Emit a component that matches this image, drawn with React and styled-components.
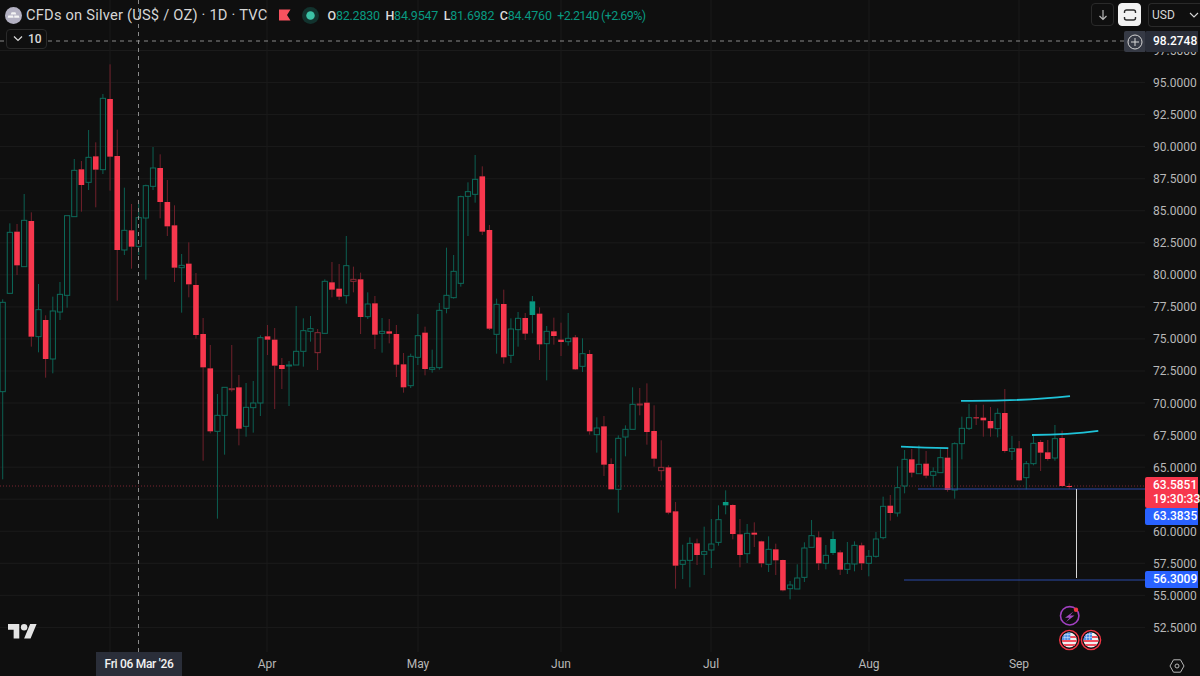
import React from 'react';
import styled, { createGlobalStyle } from 'styled-components';

const GlobalStyle = createGlobalStyle`
  html, body {
    margin: 0;
    height: 100%;
    background: #0f0f0f;
    overflow: hidden;
  }
`;

const Page = styled.div`
  position: relative;
  display: grid;
  grid-template-columns: 1145px 55px;
  grid-template-rows: 652px 24px;
  width: 1200px;
  height: 676px;
  background: #0f0f0f;
  color: #dbdbdb;
  font-family: Roboto, "Liberation Sans", sans-serif;
  overflow: hidden;
`;

const ChartPane = styled.div`
  position: relative;
  grid-column: 1;
  grid-row: 1;
`;

const ChartSvg = styled.svg`
  display: block;
`;

const Legend = styled.div`
  position: absolute;
  top: 4px;
  left: 5px;
  display: flex;
  flex-direction: column;
  align-items: flex-start;
  gap: 3px;
`;

const LegendRow = styled.div`
  display: flex;
  align-items: center;
  height: 22px;
  white-space: nowrap;
`;

const SymbolTitle = styled.span`
  margin-left: 4px;
  font-size: 14.7px;
  letter-spacing: 0.2px;
  color: #d6d6d6;
`;

const StatusIcons = styled.span`
  display: flex;
  align-items: center;
  gap: 11px;
  margin: 0 8px 0 12px;
`;

const Ohlc = styled.span`
  display: flex;
  gap: 5.5px;
  font-size: 12.5px;
  letter-spacing: -0.2px;
`;

const OhlcItem = styled.span`
  color: #089981;
  letter-spacing: ${p => (p.$tight ? '-0.6px' : 'inherit')};
  & > b {
    font-weight: 500;
    color: #dbdbdb;
  }
`;

const CollapseButton = styled.button`
  display: flex;
  align-items: center;
  gap: 4px;
  height: 20px;
  margin-left: 1px;
  padding: 0 4px 0 5px;
  background: #0f0f0f;
  border: 1px solid #2a2a2a;
  border-radius: 4px;
  color: #dbdbdb;
  font: 500 12px Roboto, sans-serif;
`;

const TopRight = styled.div`
  position: absolute;
  top: 3px;
  right: 0;
  display: flex;
  align-items: flex-start;
  gap: 4px;
`;

const ToolButton = styled.button`
  display: flex;
  align-items: center;
  justify-content: center;
  width: 23px;
  height: 23px;
  padding: 0;
  border-radius: 4px;
  border: 1px solid ${p => (p.$active ? '#f2f2f2' : '#2a2a2a')};
  background: ${p => (p.$active ? '#f2f2f2' : '#0f0f0f')};
  color: ${p => (p.$active ? '#2a2a2a' : '#b8b8b8')};
`;

const CurrencySelect = styled.button`
  display: flex;
  align-items: center;
  justify-content: space-between;
  width: 52px;
  height: 24px;
  margin-left: 3px;
  padding: 0 1px 0 3px;
  background: #0f0f0f;
  border: 1px solid #2a2a2a;
  border-right: none;
  border-radius: 4px 0 0 4px;
  color: #d6d6d6;
  font: 12px Roboto, sans-serif;
`;

const PriceAxis = styled.div`
  position: relative;
  grid-column: 2;
  grid-row: 1 / span 2;
  display: flex;
  flex-direction: column;
  padding-top: 35px;
`;

const PriceLabel = styled.div`
  flex: 0 0 32.05px;
  display: flex;
  align-items: center;
  padding-left: 8px;
  font-size: 12px;
  color: #b8b8b8;
`;

const PriceTag = styled.div`
  position: absolute;
  left: 0;
  top: ${p => p.$top}px;
  width: 45px;
  padding: 2px 0 2px 8px;
  background: ${p => p.$bg};
  border-radius: 2px 0 0 2px;
  color: #fff;
  font-size: 12px;
  font-weight: 500;
  line-height: ${p => p.$line || 13}px;
`;

const CrossPlus = styled.div`
  position: absolute;
  left: -21px;
  top: 31px;
  width: 21px;
  height: 21px;
  display: flex;
  align-items: center;
  justify-content: center;
  background: #363a45;
  border-radius: 2px 0 0 2px;
  color: #d6d6d6;
`;

const TimeAxis = styled.div`
  position: relative;
  grid-column: 1;
  grid-row: 2;
  font-size: 12px;
  color: #b8b8b8;
`;

const TimeLabel = styled.span`
  position: absolute;
  left: ${p => p.$x}px;
  top: 5px;
  transform: translateX(-50%);
`;

const TimeTag = styled.div`
  position: absolute;
  left: 96px;
  top: 0;
  width: 86px;
  height: 24px;
  display: flex;
  align-items: center;
  justify-content: center;
  background: #2a2e39;
  color: #f2f2f2;
  font-weight: 500;
  letter-spacing: -0.3px;
`;

const SettingsButton = styled.span`
  position: absolute;
  right: -40px;
  top: 6px;
  color: #b8b8b8;
  display: flex;
`;

const Logo = styled.svg`
  position: absolute;
  left: 8px;
  top: 624px;
`;

// candle rows: type, high, body top, body bottom, low, in screen px * 3 from the crop origin
const segments = [
  { y0: 50, rows: [
    'g 748 757 1025 1288', 'g 520 547 730 730', 'r 522 545 646 675', 'g 432 511 650 650', 'r 487 513 860 890',
    'g 702 779 860 907', 'r 796 810 927 983', 'g 740 783 927 970', 'g 696 733 786 810', 'g 497 497 736 773',
    'g 327 361 500 500', 'r 333 358 405 485', 'g 240 322 397 420', 'r 277 319 359 472', 'g 132 145 359 372',
    'r 43 147 320 422', 'r 239 318 600 752', 'g 413 541 600 615', 'r 462 541 590 656', 'g 460 503 589 615',
    'g 404 407 504 689', 'g 291 354 409 420', 'r 313 354 456 505', 'r 390 456 529 558', 'r 466 526 653 696',
    'g 612 646 653 788', 'r 577 641 703 742', 'r 669 705 855 866', 'r 804 852 952 1232', 'r 885 955 1144 1150',
    'g 1032 1096 1144 1406', 'g 1012 1012 1096 1214', 'h 885 1016 1019 1025', 'r 975 1012 1136 1186',
    'g 999 1072 1129 1160', 'g 993 1059 1073 1148', 'g 856 863 1059 1098', 'r 825 859 869 915',
    'r 834 869 947 1077', 'r 924 945 957 1017', 'g 933 945 948 1068', 'g 768 904 945 945',
  ] },
  { y0: 140, rows: [
    'g 535 572 634 680', 'g 528 566 574 605', 'h 567 578 638 690', 'g 418 424 580 582', 'r 366 427 449 472',
    'r 372 446 470 480', 'g 288 377 467 491', 'h 380 418 424 457', 'r 398 418 531 582', 'g 457 492 530 537',
    'r 468 490 584 627', 'g 534 574 580 638', 'r 537 574 581 610', 'r 555 582 674 711', 'r 639 673 742 758',
    'g 641 649 737 744', 'g 522 587 652 675', 'r 560 578 687 706', 'g 629 683 688 698', 'g 489 511 683 689',
    'g 323 466 505 520', 'g 345 394 473 476', 'g 167 170 430 440', 'g 127 155 169 288', 'g 45 118 163 188',
    'r 79 109 275 285', 'r 255 270 566 570', 'g 476 493 583 641', 'r 449 492 652 671', 'g 535 567 646 669',
    'g 516 535 569 620', 'r 519 534 581 600', 'f 468 484 525 580', 'r 502 521 613 660', 'g 558 574 611 721',
    'r 533 574 588 614', 'r 548 599 606 648', 'g 519 595 605 617', 'r 585 592 688 690', 'g 595 641 679 696',
  ] },
  { y0: 370, rows: [
    'r -60 -48 184 194', 'g 142 174 194 248', 'r 138 169 284 318', 'r 265 282 358 358', 'g 196 205 358 428',
    'g 166 178 201 259', 'g 52 103 178 178', 'h 54 102 105 136', 'r 40 98 186 224', 'r 106 183 266 290',
    'h 211 292 302 332', 'r 286 292 428 433', 'r 396 424 587 656', 'g 524 571 583 627', 'g 502 520 571 652',
    'r 506 520 555 585', 'g 470 545 553 615', 'g 447 522 540 594', 'g 406 449 517 527', 'f 361 396 406 433',
    'r 403 405 492 508', 'r 447 493 555 592', 'g 462 490 551 579', 'r 457 488 494 531', 'r 512 514 580 592',
    'g 499 538 583 606', 'r 521 538 571 615', 'r 569 570 661 664', 'g 633 645 656 688', 'g 583 624 657 657',
    'g 517 534 622 636', 'g 450 497 532 532', 'r 484 502 580 600', 'g 525 556 580 598', 'f 484 507 549 555',
    'r 541 547 599 615', 'g 516 581 598 612', 'g 514 526 582 604', 'r 518 526 580 600', 'g 540 559 580 619',
    'g 486 507 559 563',
  ] },
  { y0: 380, rows: [
    'g 350 379 473 478', 'r 345 377 399 422', 'g 259 323 399 410', 'g 210 238 318 340', 'r 207 238 278 292',
    'g 196 253 281 281', 'r 213 251 287 295', 'g 262 275 286 320', 'g 208 233 278 278', 'r 207 233 330 335',
    'g 187 191 330 356', 'g 110 145 191 238', 'g 72 113 145 150', 'r 74 112 114 135', 'r 74 113 121 170',
    'r 81 123 145 170', 'g 85 100 146 172', 'r 27 99 213 218', 'g 168 206 214 240', 'r 183 205 301 303',
    'g 243 251 293 328', 'g 168 190 251 256', 'r 180 186 218 273', 'r 180 217 237 242', 'g 135 176 234 242',
    'r 152 174 318 320', 'r 310 318 319 328',
  ] },
];

const candles = segments.flatMap(seg =>
  seg.rows.map(row => {
    const [type, ...nums] = row.split(' ');
    const [high, top, bottom, low] = nums.map(n => seg.y0 + Number(n) / 3);
    return { type, high, top, bottom, low };
  }),
);

const candleColors = {
  g: { wick: '#0c5f52', body: 'none', edge: '#0c6a5a' },
  f: { wick: '#0c5f52', body: '#089981', edge: '#089981' },
  r: { wick: '#70202b', body: '#f7374d', edge: '#f7374d' },
  h: { wick: '#70202b', body: 'none', edge: '#8a2a36' },
};

// 62.5000 sits behind the price tags, so its row stays empty
const prices = [
  '97.5000', '95.0000', '92.5000', '90.0000', '87.5000', '85.0000', '82.5000', '80.0000', '77.5000', '75.0000',
  '72.5000', '70.0000', '67.5000', '65.0000', '', '60.0000', '57.5000', '55.0000', '52.5000',
];

const gridRows = prices.map((_, i) => 50.5 + i * 32.05);
const gridCols = [110, 267, 418, 561, 711, 869, 1019];
const months = [
  { label: 'Apr', x: 267 },
  { label: 'May', x: 418 },
  { label: 'Jun', x: 561 },
  { label: 'Jul', x: 711 },
  { label: 'Aug', x: 869 },
  { label: 'Sep', x: 1019 },
];

const Candle = ({ candle, index }) => {
  const x = 2.7 + 7.158 * index;
  const c = candleColors[candle.type];
  const hollow = c.body === 'none';
  return (
    <g>
      <line x1={x} x2={x} y1={candle.high} y2={candle.top} stroke={c.wick} />
      <line x1={x} x2={x} y1={candle.bottom} y2={candle.low} stroke={c.wick} />
      <rect
        x={x - (hollow ? 2.6 : 2.8)}
        y={candle.top}
        width={hollow ? 5.2 : 5.6}
        height={Math.max(candle.bottom - candle.top, 1)}
        fill={c.body}
        stroke={hollow ? c.edge : 'none'}
      />
    </g>
  );
};

const UsFlag = ({ cx, id }) => (
  <g>
    <clipPath id={id}>
      <circle cx={cx} cy="640" r="7.5" />
    </clipPath>
    <circle cx={cx} cy="640" r="9.6" fill="#0f0f0f" stroke="#f23645" strokeWidth="1.4" />
    <g clipPath={`url(#${id})`}>
      <rect x={cx - 8} y="632" width="16" height="16" fill="#f0f0f0" />
      <rect x={cx - 8} y="636" width="16" height="2" fill="#f0505f" />
      <rect x={cx - 8} y="640" width="16" height="2" fill="#f0505f" />
      <rect x={cx - 8} y="644" width="16" height="2" fill="#f0505f" />
      <rect x={cx - 8} y="632" width="9" height="8" fill="#4f8fe8" />
      <path d={`M${cx - 6} 634.5h7M${cx - 6} 637.5h7M${cx - 4.5} 632v8M${cx - 1.5} 632v8`} stroke="#cfe0f7" strokeWidth="0.6" />
    </g>
  </g>
);

const PriceChart = () => (
  <ChartSvg width="1145" height="652" viewBox="0 0 1145 652">
    {gridRows.map(y => (
      <line key={y} x1="0" x2="1145" y1={y} y2={y} stroke="#1b1b1b" />
    ))}
    {gridCols.map(x => (
      <line key={x} x1={x} x2={x} y1="0" y2="652" stroke="#1b1b1b" />
    ))}
    <line x1="0" x2="1145" y1="486" y2="486" stroke="#7a2530" strokeDasharray="1 2" />
    {candles.map((c, i) => (
      <Candle key={i} candle={c} index={i} />
    ))}
    <line x1="138.5" x2="138.5" y1="0" y2="652" stroke="#8a8a8a" strokeDasharray="4 4" />
    <line x1="0" x2="1124" y1="41" y2="41" stroke="#8a8a8a" strokeDasharray="4 4" />
    <line x1="918" x2="1145" y1="489" y2="489" stroke="#2a4aa8" strokeWidth="1.2" />
    <line x1="904" x2="1145" y1="580" y2="580" stroke="#2a4aa8" strokeWidth="1.2" />
    <line x1="1076.5" x2="1076.5" y1="489" y2="578" stroke="#d8d8d8" strokeWidth="1" />
    <g fill="none" stroke="#1fc3d8" strokeWidth="1.8">
      <path d="M901 446.7C918 447.5 935 448 948.3 448.2" />
      <path d="M961 400.8C990 401 1030 400.5 1070 396.2" />
      <path d="M1032 435C1055 434.8 1078 433.5 1098.3 430.8" />
    </g>
    <circle cx="1069.7" cy="615.8" r="9.2" fill="#0f0f0f" stroke="#a040c0" strokeWidth="1.6" />
    <path d="M1073.5 611.5L1065 617.8H1069.5L1066 622L1074.500 615.6H1070z" fill="#a348c0" />
    <circle cx="1076" cy="609.8" r="2.2" fill="#f23645" />
    <UsFlag cx={1069.3} id="flag-a" />
    <UsFlag cx={1091} id="flag-b" />
  </ChartSvg>
);

const SilverIcon = () => (
  <svg width="17" height="17" viewBox="0 0 18 18">
    <circle cx="9" cy="9" r="9" fill="#b3b1c2" />
    <path d="M7 5.500h4l1 2.500H6z M3.500 9h5l.7 2.500H2.800z M9.800 9h4.700l.8 2.500H9.800z" fill="#f4f4f4" />
  </svg>
);

const FlagIcon = () => (
  <svg width="12" height="12" viewBox="0 0 12 12">
    <path d="M0 .5h11.500L8 6l3.500 5.500H0z" fill="#f7525f" />
  </svg>
);

const StatusDot = () => (
  <svg width="17" height="17" viewBox="0 0 18 18">
    <circle cx="9" cy="9" r="9" fill="#12332e" />
    <circle cx="9" cy="9" r="4.500" fill="#3cc2a6" />
  </svg>
);

const App = () => (
  <Page>
    <GlobalStyle />
    <ChartPane>
      <PriceChart />
      <Legend>
        <LegendRow>
          <SilverIcon />
          <SymbolTitle>CFDs on Silver (US$ / OZ) · 1D · TVC</SymbolTitle>
          <StatusIcons>
            <FlagIcon />
            <StatusDot />
          </StatusIcons>
          <Ohlc>
            <OhlcItem><b>O</b>82.2830</OhlcItem>
            <OhlcItem><b>H</b>84.9547</OhlcItem>
            <OhlcItem><b>L</b>81.6982</OhlcItem>
            <OhlcItem><b>C</b>84.4760</OhlcItem>
            <OhlcItem $tight>+2.2140 (+2.69%)</OhlcItem>
          </Ohlc>
        </LegendRow>
        <CollapseButton>
          <svg width="12" height="8" viewBox="0 0 12 8" fill="none" stroke="currentColor" strokeWidth="1.2">
            <path d="M2 1.500l4 4 4-4" />
          </svg>
          10
        </CollapseButton>
      </Legend>
      <Logo width="29" height="15" viewBox="0 0 36 18.500">
        <path d="M14 18H7V7H0V0h14zM28 18h-8L27.500 0h8z" fill="#e4e4e4" />
        <circle cx="20" cy="4" r="4" fill="#e4e4e4" />
      </Logo>
    </ChartPane>
    <PriceAxis>
      {prices.map((p, i) => (
        <PriceLabel key={i}>{p}</PriceLabel>
      ))}
      <CrossPlus>
        <svg width="16" height="16" viewBox="0 0 16 16" fill="none" stroke="currentColor" strokeWidth="1">
          <circle cx="8" cy="8" r="7" />
          <path d="M8 4v8M4 8h8" />
        </svg>
      </CrossPlus>
      <PriceTag $top={31} $bg="#2a2e39" $line={17}>98.2748</PriceTag>
      <PriceTag $top={477} $bg="#f7374d" $line={13.5}>63.5851<br />19:30:33</PriceTag>
      <PriceTag $top={508} $bg="#2962ff">63.3835</PriceTag>
      <PriceTag $top={571} $bg="#2962ff">56.3009</PriceTag>
    </PriceAxis>
    <TimeAxis>
      {months.map(m => (
        <TimeLabel key={m.label} $x={m.x}>{m.label}</TimeLabel>
      ))}
      <TimeTag>Fri 06 Mar &apos;26</TimeTag>
      <SettingsButton>
        <svg width="16" height="16" viewBox="0 0 16 16" fill="none" stroke="currentColor" strokeWidth="1">
          <path d="M4.500 1.800h7L15 8l-3.500 6.200h-7L1 8z" />
          <circle cx="8" cy="8" r="2" />
        </svg>
      </SettingsButton>
    </TimeAxis>
    <TopRight>
      <ToolButton>
        <svg width="14" height="14" viewBox="0 0 14 14" fill="none" stroke="currentColor" strokeWidth="1.2">
          <path d="M7 2v9.500M3.500 8l3.500 3.500L10.500 8" />
        </svg>
      </ToolButton>
      <ToolButton $active>
        <svg width="16" height="16" viewBox="0 0 16 16" fill="none" stroke="currentColor" strokeWidth="1.4">
          <path d="M2.500 6V5a2 2 0 0 1 2-2h7a2 2 0 0 1 2 2v1M2.500 10v1a2 2 0 0 0 2 2h7a2 2 0 0 0 2-2v-1" />
        </svg>
      </ToolButton>
      <CurrencySelect>
        USD
        <svg width="10" height="6" viewBox="0 0 10 6" fill="none" stroke="currentColor" strokeWidth="1.1">
          <path d="M1 1l4 4 4-4" />
        </svg>
      </CurrencySelect>
    </TopRight>
  </Page>
);

export default App;
